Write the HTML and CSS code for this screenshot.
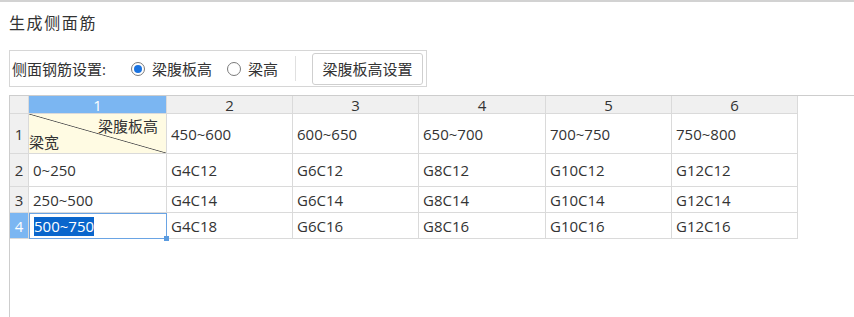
FILE: index.html
```html
<!DOCTYPE html>
<html>
<head>
    <meta charset="utf-8">
    <link rel="stylesheet" href="styles.css">
</head>
<body>
<div class="window">
    <div class="title">生成侧面筋</div>

    <div class="setting-box">
        <span class="setting-label">侧面钢筋设置:</span>
        <label class="radio checked"><span class="radio-dot"></span>梁腹板高</label>
        <label class="radio"><span class="radio-dot"></span>梁高</label>
        <span class="separator"></span>
        <button class="setting-button">梁腹板高设置</button>
    </div>

    <div class="grid-wrap">
        <div class="grid">
            <div class="corner"></div>
            <div class="col-head active">1</div>
            <div class="col-head">2</div>
            <div class="col-head">3</div>
            <div class="col-head">4</div>
            <div class="col-head">5</div>
            <div class="col-head">6</div>

            <div class="row-head">1</div>
            <div class="cell diag">
                <span class="diag-top">梁腹板高</span>
                <span class="diag-bottom">梁宽</span>
            </div>
            <div class="cell">450~600</div>
            <div class="cell">600~650</div>
            <div class="cell">650~700</div>
            <div class="cell">700~750</div>
            <div class="cell">750~800</div>

            <div class="row-head">2</div>
            <div class="cell">0~250</div>
            <div class="cell">G4C12</div>
            <div class="cell">G6C12</div>
            <div class="cell">G8C12</div>
            <div class="cell">G10C12</div>
            <div class="cell">G12C12</div>

            <div class="row-head">3</div>
            <div class="cell">250~500</div>
            <div class="cell">G4C14</div>
            <div class="cell">G6C14</div>
            <div class="cell">G8C14</div>
            <div class="cell">G10C14</div>
            <div class="cell">G12C14</div>

            <div class="row-head active">4</div>
            <div class="cell selected"><span class="sel-text">500~750</span><span class="handle"></span></div>
            <div class="cell">G4C18</div>
            <div class="cell">G6C16</div>
            <div class="cell">G8C16</div>
            <div class="cell">G10C16</div>
            <div class="cell">G12C16</div>
        </div>
    </div>
</div>
</body>
</html>
```

FILE: styles.css
```css
html, body {
    margin: 0;
    padding: 0;
    background-color: #fff;
}

body {
    font-family: "Open Sans", "Noto Sans CJK SC", sans-serif;
    color: #333;
    width: 854px;
    height: 317px;
    overflow: hidden;
}

.window {
    border-top: 2px solid #d2d2d2;
    height: 315px;
    display: flex;
    flex-direction: column;
}

.title {
    font-size: 16px;
    line-height: 22px;
    padding: 10px 0 0 9px;
    height: 38px;
    box-sizing: border-box;
    letter-spacing: 1.6px;
    color: #333;
}

.setting-box {
    margin: 10px 0 0 9px;
    width: 418px;
    height: 37px;
    box-sizing: border-box;
    border: 1px solid #d6d6d6;
    display: flex;
    align-items: center;
    padding: 0 0 0 2px;
    font-size: 15px;
    white-space: nowrap;
}

.setting-box > * {
    flex-shrink: 0;
}

.setting-label {
    margin-right: 25px;
}

.radio {
    display: flex;
    align-items: center;
    margin-right: 15px;
}

.radio-dot {
    width: 14px;
    height: 14px;
    box-sizing: border-box;
    border: 1px solid #7a7a7a;
    border-radius: 50%;
    margin-right: 7px;
    display: flex;
    align-items: center;
    justify-content: center;
}

.radio.checked .radio-dot::after {
    content: "";
    width: 8px;
    height: 8px;
    border-radius: 50%;
    background-color: #1a73e0;
}

.separator {
    width: 1px;
    height: 25px;
    background-color: #e0e0e0;
    margin: 0 16px 0 2px;
}

.setting-button {
    width: 111px;
    height: 32px;
    font-family: inherit;
    font-size: 15px;
    color: #333;
    background-color: #fff;
    border: 1px solid #cfcfcf;
    border-radius: 3px;
    padding: 0;
}

.grid-wrap {
    margin: 8px 0 0 9px;
    flex: 1;
    border-top: 1px solid #cdcdcd;
    border-left: 1px solid #cdcdcd;
}

.grid {
    display: grid;
    grid-template-columns: 19px 138px 126px 126px 127px 126px 126px;
    grid-template-rows: 18px 40px 33px 26px 26px;
    width: 788px;
    font-size: 15px;
}

.grid > div {
    box-sizing: border-box;
    border-right: 1px solid #dadada;
    border-bottom: 1px solid #dadada;
}

.corner,
.col-head,
.row-head {
    background-color: #f0f0f0;
    color: #333;
    display: flex;
    align-items: center;
    justify-content: center;
}

.col-head {
    line-height: 18px;
}

.col-head.active,
.row-head.active {
    background-color: #7bb6f2;
    color: #fff;
}

.cell {
    display: flex;
    align-items: center;
    padding-left: 4px;
    white-space: nowrap;
}

.diag {
    position: relative;
    background-color: #fffbe3;
    background-image: linear-gradient(to top right, transparent calc(50% - 0.8px), #555 50%, transparent calc(50% + 0.8px));
    padding: 0;
}

.diag-top {
    position: absolute;
    top: 2px;
    right: 8px;
    line-height: 20px;
}

.diag-bottom {
    position: absolute;
    left: 0;
    bottom: 1px;
    line-height: 20px;
}

.cell.selected {
    position: relative;
    border: 1px solid #6aa4e4 !important;
    padding-left: 4px;
}

.sel-text {
    background-color: #0a66cc;
    color: #fff;
    line-height: 19px;
}

.handle {
    position: absolute;
    right: -3px;
    bottom: -3px;
    width: 5px;
    height: 5px;
    background-color: #5a9be0;
}
```
